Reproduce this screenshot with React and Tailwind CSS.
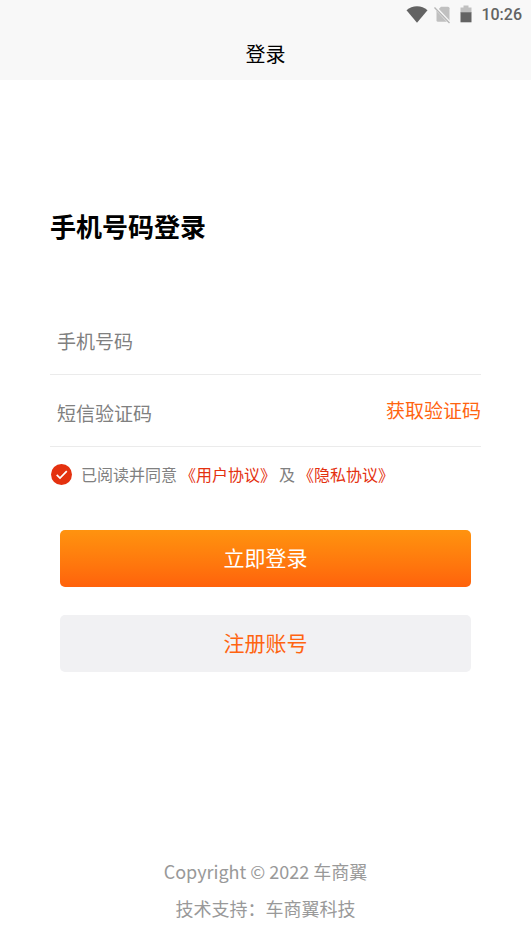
import { useState } from "react";

function StatusBar() {
  return (
    <div className="flex h-7 items-center justify-end pr-[9px] text-[#636363]">
      <svg className="mr-[6px] h-5 w-[22px]" viewBox="0 0 22 20" aria-hidden="true">
        <path d="M0.500 6.200C3.500 3.600 7 2.300 11 2.300s7.500 1.300 10.500 3.900L11 18.800z" fill="#636363" />
      </svg>
      <svg className="mr-[9px] h-5 w-[17px]" viewBox="0 0 17 20" aria-hidden="true">
        <path d="M2.500 7.300 7 2.700h7q1.500 0 1.500 1.500v12q0 1.500-1.500 1.500H4q-1.500 0-1.500-1.500z" fill="#c0c0c0" />
        <path d="M0 2 15.500 18.500" stroke="#f8f8f8" strokeWidth="3" />
        <path d="M0.500 3.500 15.500 19" stroke="#b5b5b5" strokeWidth="1.300" />
      </svg>
      <svg className="mr-[9px] h-5 w-3" viewBox="0 0 12 20" aria-hidden="true">
        <path d="M0.500 3.500h3V1.500h5v2h3V9h-11z" fill="#c0c0c0" />
        <path d="M0.500 8.300h11V18.300h-11z" fill="#636363" />
      </svg>
      <span className="pt-[2px] font-[Roboto] text-[16px] leading-5 font-medium">10:26</span>
    </div>
  );
}

function Agreement() {
  const [agreed, setAgreed] = useState(true);
  return (
    <div className="flex h-[54px] items-center gap-[3px] px-px text-[16px] text-[#808080]">
      <label className="flex items-center">
        <input
          type="checkbox"
          className="peer sr-only"
          checked={agreed}
          onChange={(e) => setAgreed(e.target.checked)}
        />
        <svg
          className="mr-[9px] size-[21px] rounded-full bg-gray-300 peer-checked:bg-[#e4310f]"
          viewBox="0 0 21 21"
          fill="none"
          aria-hidden="true"
        >
          <path d="M5.700 10.800 9 14l6.800-6.800" stroke="#fff" strokeWidth="1.700" />
        </svg>
        已阅读并同意
      </label>
      <a href="#terms" className="text-[#e4310f]">《用户协议》</a>
      <span>及</span>
      <a href="#privacy" className="text-[#e4310f]">《隐私协议》</a>
    </div>
  );
}

export default function App() {
  return (
    <div className="flex min-h-screen flex-col bg-white font-['Noto_Sans_CJK_SC',sans-serif]">
      <header className="bg-[#f8f8f8]">
        <StatusBar />
        <h1 className="h-[52px] text-center text-[20px] leading-[52px] text-black">登录</h1>
      </header>

      <main className="px-[50px] pt-[126px]">
        <h2 className="text-[26px] leading-10 font-bold text-black">手机号码登录</h2>

        <form className="mt-[57px]" onSubmit={(e) => e.preventDefault()}>
          <div className="flex h-[72px] items-center border-b border-[#ebebeb] px-[7px] pt-1">
            <input
              type="tel"
              aria-label="手机号码"
              placeholder="手机号码"
              className="h-10 w-full text-[19px] text-black outline-none placeholder:text-[#808080]"
            />
          </div>
          <div className="flex h-[72px] items-center border-b border-[#ebebeb] pt-1 pl-[7px]">
            <input
              type="text"
              aria-label="短信验证码"
              placeholder="短信验证码"
              className="h-10 min-w-0 flex-1 text-[19px] text-black outline-none placeholder:text-[#808080]"
            />
            <button type="button" className="pb-1 text-[19px] text-[#ff6410]">获取验证码</button>
          </div>

          <Agreement />

          <div className="mt-[29px] flex flex-col gap-7 px-[10px]">
            <button
              type="submit"
              className="h-[57px] rounded-[5px] bg-linear-to-b from-[#ff930f] to-[#ff620c] pb-[2px] text-[21px] text-white"
            >
              立即登录
            </button>
            <button type="button" className="h-[57px] rounded-[5px] bg-[#f1f1f3] pb-[2px] text-[21px] text-[#ff6410]">
              注册账号
            </button>
          </div>
        </form>
      </main>

      <footer className="mt-auto pb-[18px] text-center text-[18px] leading-[37px] text-[#999]">
        <p>Copyright © 2022 车商翼</p>
        <p>技术支持：车商翼科技</p>
      </footer>
    </div>
  );
}
